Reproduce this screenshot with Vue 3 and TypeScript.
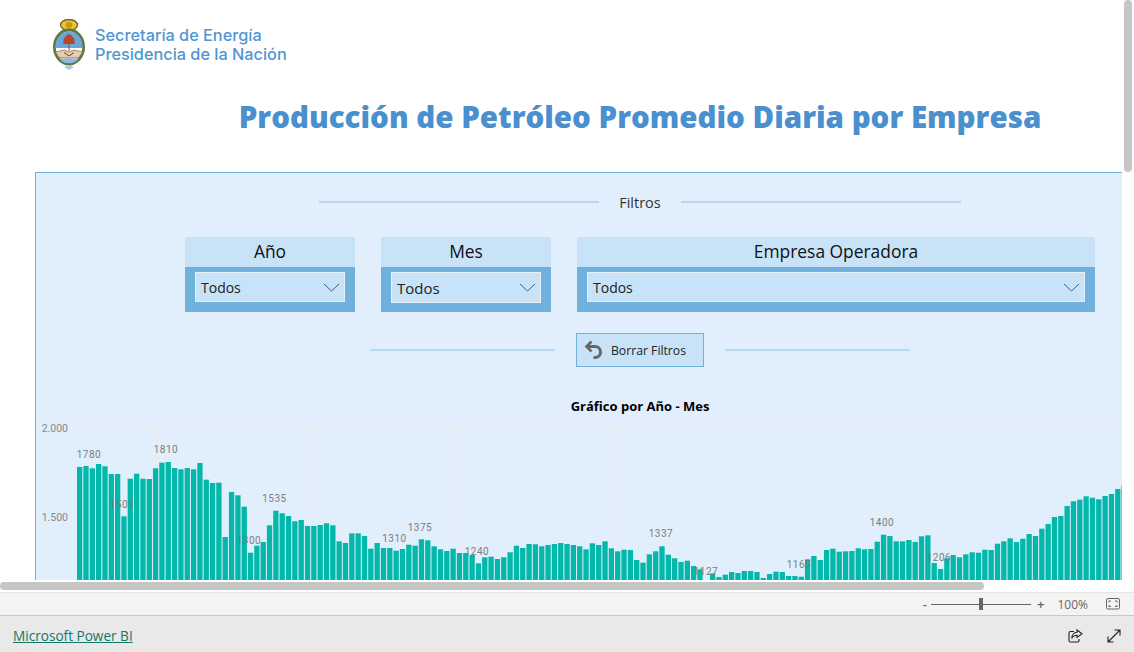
<script setup lang="ts">
// bar heights in px above the visible floor of the report viewport
const heights: number[] = [
  113, 114, 111.7, 116, 113.7, 106, 106, 63.7, 101.3, 106.3, 101.3, 101, 111.7, 117.3, 118, 112, 110.7, 112, 110.7, 117,
  100.3, 97, 97.3, 43, 88, 84.7, 73.3, 27.3, 34.3, 38, 54.7, 69.3, 66.7, 64, 58.7, 60, 54, 54, 55, 56.7,
  54.7, 38.7, 37, 46.7, 46.7, 44, 31.3, 37, 32, 32, 29.3, 31, 35.3, 34.3, 40.7, 39.7, 33.7, 30.7, 29, 31.3,
  27, 27, 25, 16.7, 22.7, 23.3, 21, 22.7, 27.7, 34.3, 32, 36, 35.7, 33.7, 35, 36, 37, 36, 35, 33.7,
  30.7, 36.7, 35, 38.7, 31.7, 28.7, 30.3, 30, 20, 17.3, 25.7, 28.7, 33.7, 25.3, 21.7, 18, 19.3, 14, 10.7, 0,
  6.7, 3, 5.3, 8, 7, 9, 9, 8, 2, 6, 8.3, 8, 4, 4, 3.3, 20.7, 24, 20, 30, 31.3,
  28.3, 28.7, 29, 31.7, 30.7, 31, 38.3, 45.3, 44, 38.7, 38.7, 40, 38, 43.7, 44.7, 17, 11, 21.7, 25, 22.7,
  25.7, 27.7, 27.3, 30.3, 30, 36.3, 38.7, 41.7, 38, 41.3, 46, 44, 51.3, 56, 63, 64, 74, 78.7, 80.3, 83.7,
  82.3, 80.7, 84, 86, 91, 94,
];

const FLOOR = 160;
const bars = heights.map((h, i) => ({
  x: 41 + i * 6.33,
  y: FLOOR - h,
  h: h + 20,
}));

const labels = [
  { t: "1780", x: 53, y: 38 },
  { t: "1810", x: 130, y: 33 },
  { t: "1503", x: 86, y: 88 },
  { t: "1535", x: 238.5, y: 82 },
  { t: "1300", x: 213, y: 124 },
  { t: "1310", x: 358.5, y: 122 },
  { t: "1375", x: 384, y: 111 },
  { t: "1240", x: 441, y: 135 },
  { t: "1337", x: 625, y: 117 },
  { t: "1127", x: 670, y: 155 },
  { t: "1165", x: 763, y: 148 },
  { t: "1400", x: 846, y: 106 },
  { t: "1206", x: 903, y: 141 },
];

const gridX = [120, 272, 424, 576, 727, 879, 1031];

const slicers = [
  { title: "Año", cls: "narrow" },
  { title: "Mes", cls: "narrow mes" },
  { title: "Empresa Operadora", cls: "wide" },
];
</script>

<template>
  <div class="app">
    <div class="report">
      <main class="viewport">
        <div class="canvas">
          <header class="brand">
            <svg class="crest" width="34" height="52" viewBox="0 0 34 52">
              <ellipse cx="17" cy="6" rx="8.500" ry="5.500" fill="#ecc42c" stroke="#6e6428" stroke-width="1.300" />
              <ellipse cx="17" cy="6" rx="3.500" ry="3" fill="#c9981c" />
              <ellipse cx="17" cy="28" rx="14.600" ry="17" fill="#fff" stroke="#5a7a48" stroke-width="2.800" />
              <path d="M3.500 29 C3.500 18 10 12.500 17 12.500 C24 12.500 30.500 18 30.500 29 Z" fill="#6ba6d8" />
              <path d="M7.500 39.500 H26.500 C24 43 21 44.300 17 44.300 C13 44.300 10 43 7.500 39.500 Z" fill="#8dbbe0" />
              <path d="M11.500 25 C11 20 12.500 18 14 17.500 C14.500 14.500 19.500 14.500 20 17.500 C21.500 18 23 20 22.500 25 Z" fill="#b5482c" />
              <path d="M17 25 V32" stroke="#7a5a3a" stroke-width="1" />
              <path d="M3.500 33 L12 31 L17 33 L22 31 L30.500 33 L27 38.500 L17 39 L7 38.500 Z" fill="#e8cdae" stroke="#86664a" stroke-width="0.700" />
              <path d="M12 33.500 L17 37 L22 33.500" fill="none" stroke="#5d4632" stroke-width="1" />
              <path d="M12 48 L17 46 L22 48 L17 51 Z" fill="#a9cbe6" />
            </svg>
            <div class="brand-text">
              <span>Secretaría de Energía</span>
              <span>Presidencia de la Nación</span>
            </div>
          </header>

          <h1 class="title">Producción de Petróleo Promedio Diaria por Empresa</h1>

          <section class="panel">
            <div class="divider-row filters-row">
              <span class="rule rule-long"></span>
              <span class="filters-label">Filtros</span>
              <span class="rule rule-long"></span>
            </div>

            <div class="slicers">
              <div v-for="s in slicers" :key="s.title" class="slicer" :class="s.cls">
                <div class="slicer-head">{{ s.title }}</div>
                <div class="slicer-body">
                  <div class="dropdown">
                    <span class="dropdown-value">Todos</span>
                    <svg width="17" height="9" viewBox="0 0 17 9">
                      <path d="M1 1 L8.500 8 L16 1" fill="none" stroke="#3f5f78" stroke-width="1" />
                    </svg>
                  </div>
                </div>
              </div>
            </div>

            <div class="divider-row button-row">
              <span class="rule rule-short"></span>
              <button class="reset" type="button">
                <svg width="20" height="20" viewBox="0 0 20 20">
                  <path d="M7.500 1.500 L2.500 6.500 L7.500 11.500" fill="none" stroke="#666" stroke-width="2.600" />
                  <path d="M3 6.500 H11 C14.300 6.500 16.500 8.700 16.500 12 C16.500 15.300 14.300 17.500 11 17.500 H9.500" fill="none" stroke="#666" stroke-width="3" />
                </svg>
                <span class="reset-label">Borrar Filtros</span>
              </button>
              <span class="rule rule-short"></span>
            </div>

            <h2 class="chart-title">Gráfico por Año - Mes</h2>

            <svg class="chart" width="1208" height="200" viewBox="0 0 1208 200">
              <line x1="41" x2="1208" y1="8.500" y2="8.500" class="grid" />
              <line x1="41" x2="1208" y1="97.500" y2="97.500" class="grid" />
              <line v-for="g in gridX" :key="g" :x1="g + 0.5" :x2="g + 0.5" y1="8" y2="160" class="grid" />
              <text x="32" y="12" text-anchor="end" class="axis">2.000</text>
              <text x="32" y="101" text-anchor="end" class="axis">1.500</text>
              <rect
                v-for="(b, i) in bars"
                :key="i"
                :x="b.x"
                :y="b.y"
                width="5.300"
                :height="b.h"
                class="bar"
              />
              <text v-for="l in labels" :key="l.t" :x="l.x" :y="l.y" text-anchor="middle" class="value">{{ l.t }}</text>
            </svg>
          </section>
        </div>
      </main>
      <div class="vtrack"><div class="vthumb"></div></div>
      <div class="htrack"><div class="hthumb"></div></div>
    </div>

    <div class="zoombar">
      <span class="zoom-sign minus">-</span>
      <div class="slider"><span class="slider-thumb"></span></div>
      <span class="zoom-sign plus">+</span>
      <span class="zoom-value">100%</span>
      <svg class="fit" width="14" height="12" viewBox="0 0 14 12">
        <rect x="0.500" y="0.500" width="13" height="10.500" rx="1.500" fill="none" stroke="#666" />
        <path d="M3 4.500 V3 H5 M9 3 H11 V4.500 M11 7 V8.500 H9 M5 8.500 H3 V7" fill="none" stroke="#666" />
      </svg>
    </div>

    <footer class="footer">
      <a class="pbi-link" href="#">Microsoft Power BI</a>
      <div class="footer-icons">
        <svg width="15" height="14" viewBox="0 0 15 14">
          <path d="M6 2.500 H2.500 C1.500 2.500 1 3 1 4 V11.500 C1 12.500 1.500 13 2.500 13 H9.500 C10.500 13 11 12.500 11 11.500 V10" fill="none" stroke="#222" stroke-width="1.100" />
          <path d="M9 1 L14 4.800 L9 8.500 V6.300 C6.500 6.300 4.800 7.300 3.800 9.500 C3.800 6 6 3.500 9 3.300 Z" fill="none" stroke="#222" stroke-width="1.100" />
        </svg>
        <svg width="14" height="14" viewBox="0 0 14 14">
          <path d="M1 13 L13 1 M7.500 1 H13 V6.500 M1 7.500 V13 H6.500" fill="none" stroke="#222" stroke-width="1.100" />
        </svg>
      </div>
    </footer>
  </div>
</template>

<style scoped>
.app {
  width: 1134px;
  height: 652px;
  display: flex;
  flex-direction: column;
  overflow: hidden;
  font-family: "Open Sans", "Noto Sans", sans-serif;
  background: #fff;
}

.report {
  display: grid;
  grid-template-columns: 1122px 12px;
  grid-template-rows: 580px 12px;
  flex: none;
}

.viewport {
  overflow: hidden;
}

.canvas {
  width: 1280px;
}

.brand {
  height: 95px;
  box-sizing: border-box;
  padding: 19px 0 0 52px;
  display: flex;
  gap: 9px;
}

.crest {
  flex: none;
}

.brand-text {
  display: flex;
  flex-direction: column;
  font-family: Inter, "Open Sans", sans-serif;
  font-size: 16.3px;
  font-weight: 500;
  line-height: 19px;
  color: #5096d2;
  padding-top: 7px;
  white-space: nowrap;
}

.title {
  margin: 0 0 33px;
  height: 44px;
  line-height: 44px;
  text-align: center;
  font-size: 29.5px;
  font-weight: 800;
  color: #4a8fce;
  white-space: nowrap;
}

.panel {
  width: 1210px;
  margin-left: 35px;
  box-sizing: border-box;
  border: 1px solid #6fb0dd;
  background: #e1eefb;
  padding-top: 19px;
  height: 620px;
}

.divider-row {
  display: flex;
  align-items: center;
  justify-content: center;
}

.filters-row {
  height: 20px;
  gap: 20px;
}

.rule {
  display: block;
  height: 2px;
  background: #b5d7f0;
}

.rule-long {
  width: 280px;
}

.rule-short {
  width: 185px;
}

.filters-label {
  font-size: 14.5px;
  color: #333;
}

.slicers {
  display: flex;
  justify-content: center;
  gap: 26px;
  margin-top: 25px;
}

.slicer {
  width: 170px;
}

.slicer.wide {
  width: 518px;
}

.slicer-head {
  height: 30px;
  line-height: 28px;
  text-align: center;
  font-size: 17.4px;
  color: #111;
  background: #c8e2f7;
}

.slicer-body {
  height: 45px;
  box-sizing: border-box;
  padding: 5px 10px;
  background: #6fb0dd;
}

.dropdown {
  height: 30px;
  box-sizing: border-box;
  border: 1px solid #e6f0f8;
  background: #c8e2f7;
  display: flex;
  align-items: center;
  justify-content: space-between;
  padding: 0 4px 0 5px;
  font-size: 14px;
  color: #222;
}

.dropdown-value {
  padding-top: 1px;
}

.mes .dropdown {
  height: 31px;
  font-size: 15px;
}

.button-row {
  margin-top: 21px;
  height: 34px;
  gap: 21px;
}

.reset {
  width: 128px;
  height: 34px;
  box-sizing: border-box;
  border: 1px solid #6fb0dd;
  background: #c8e2f7;
  display: flex;
  align-items: center;
  gap: 7px;
  padding: 0 0 0 7px;
  font-family: inherit;
  font-size: 12.2px;
  color: #222;
}

.reset-label {
  padding-top: 1px;
}

.chart-title {
  margin: 32px 0 7px;
  height: 14px;
  line-height: 14px;
  text-align: center;
  font-size: 13px;
  font-weight: 700;
  color: #000;
}

.chart {
  display: block;
}

.grid {
  stroke: #e9ecef;
  stroke-width: 1;
}

.bar {
  fill: #01b8aa;
}

.axis {
  font-family: Roboto, sans-serif;
  font-size: 10.5px;
  fill: #888;
}

.value {
  font-family: Roboto, sans-serif;
  font-size: 10px;
  letter-spacing: 0.5px;
  fill: #7d7d7d;
}

.vtrack {
  background: #fff;
  padding-left: 2px;
}

.vthumb {
  width: 8px;
  height: 172px;
  border-radius: 4px;
  background: #c6c6c6;
}

.htrack {
  grid-column: 1 / -1;
  background: #fff;
  padding-top: 2px;
}

.hthumb {
  width: 984px;
  height: 8px;
  border-radius: 4px;
  background: #c6c6c6;
}

.zoombar {
  height: 22px;
  flex: none;
  box-sizing: content-box;
  border-top: 1px solid #e4e4e4;
  border-bottom: 1px solid #c8c8c8;
  background: #f3f3f3;
  display: flex;
  align-items: center;
  justify-content: flex-end;
  padding-right: 14px;
  color: #666;
}

.zoom-sign {
  font-size: 13px;
  font-weight: 600;
}

.slider {
  width: 100px;
  height: 1px;
  margin: 0 6px 0 4px;
  background: #666;
  display: flex;
  align-items: center;
  justify-content: center;
}

.slider-thumb {
  display: block;
  flex: none;
  width: 4px;
  height: 12px;
  background: #666;
}

.zoom-value {
  font-size: 12px;
  margin: 0 18px 0 13px;
}

.fit {
  flex: none;
}

.footer {
  flex: 1;
  box-sizing: border-box;
  background: #e9e9e9;
  display: flex;
  align-items: center;
  justify-content: space-between;
  padding: 3px 13px 0;
}

.pbi-link {
  font-size: 13.6px;
  color: #117865;
  text-decoration: underline;
}

.footer-icons {
  display: flex;
  align-items: center;
  gap: 24px;
}
</style>

<style>
html,
body {
  margin: 0;
  overflow: hidden;
}
</style>
